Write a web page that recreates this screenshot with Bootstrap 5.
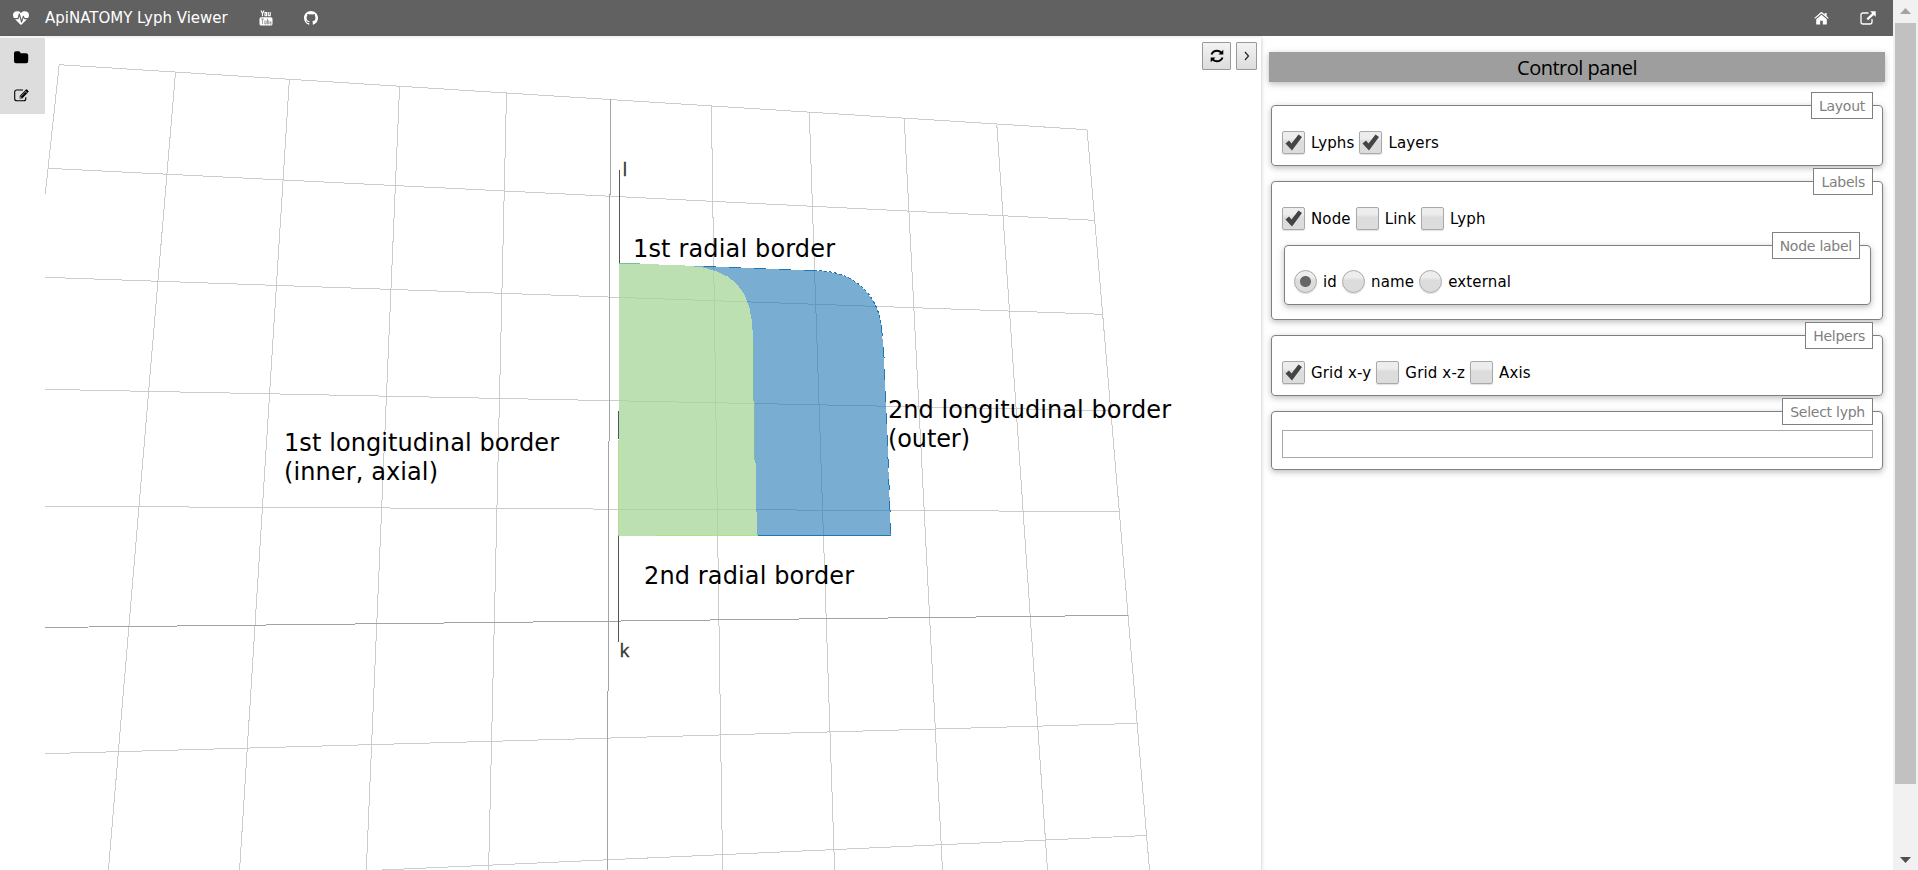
<!DOCTYPE html>
<html lang="en">
<head>
<meta charset="utf-8">
<title>ApiNATOMY Lyph Viewer</title>
<link href="https://cdn.jsdelivr.net/npm/bootstrap@5.3.0/dist/css/bootstrap.min.css" rel="stylesheet">
<script src="https://cdn.jsdelivr.net/npm/bootstrap@5.3.0/dist/js/bootstrap.bundle.min.js"></script>
<style>
  body { font: 15px/1.5 "DejaVu Sans", sans-serif; color: #000; height: 870px; background: #fff; }
  svg { display: block; flex: none; }
  .topbar { height: 36px; background: #616161; color: #fff; padding: 0 17px 0 13px; }
  .brand { margin-left: 16px; letter-spacing: 0; }
  .yt { margin-left: 31px; }
  .gh { margin-left: 31px; }
  .ext { margin-left: 31px; }
  .workspace { border-top: 2px solid #f4f4f4; width: 1261px; box-shadow: 0 2px 4px rgba(0,0,0,.25); }
  .rail { width: 45px; height: 76px; background: #ddd; padding: 13px 0 0 14px; }
  .rail svg + svg { margin-top: 25px; }
  .stage { width: 1216px; }
  .tools { top: 4px; right: 4px; gap: 5px; }
  .tool { height: 28px; border: 1px solid #999; border-radius: 1px; background: linear-gradient(#f3f3f3, #dcdcdc); padding: 0; display: flex; align-items: center; justify-content: center; }
  .tool-wide { width: 29px; }
  .tool-slim { width: 21px; }
  .control { padding: 16px 8px 0 8px; }
  .heading { height: 30px; background: #9e9e9e; font: 20px/32px "Open Sans", "Noto Sans", sans-serif; letter-spacing: -.5px; margin-bottom: 23px; }
  .heading, .group { box-shadow: 0 2px 5px rgba(0,0,0,.16), 0 2px 10px rgba(0,0,0,.12); }
  .group { border: 1px solid #808080; border-radius: 4px; margin: 0 2px 15px; padding: 25px 9px 0 10px; height: 61px; }
  .group-tall { height: 139px; }
  .group-inner { height: 60px; margin: 15px 2px 0 2px; padding: 24px 9px 0; }
  .group-select { height: 59px; padding-top: 18px; }
  .caption { top: -14px; right: 9px; height: 27px; border: 1px solid #808080; background: #fff; color: #808080; font-size: 14px; line-height: 26px; padding: 0 7px; letter-spacing: -.25px; }
  .group-inner > .caption { right: 10px; }
  .opts { height: 23px; gap: 5px; letter-spacing: .15px; }
  .opt { gap: 6px; height: 25px; line-height: 25px; }
  .opt input { appearance: none; width: 23px; height: 23px; margin: -2px 0 0; border: 1px solid #a9a9a9; border-radius: 2px; background: linear-gradient(#ededed 30%, #dcdcdc 45%); box-shadow: 0 1px 1px rgba(0,0,0,.12); }
  .opt input[type=radio] { border-radius: 50%; }
  .opt input[type=radio]:checked { background: radial-gradient(circle, #666 5px, transparent 6px), linear-gradient(#ededed 30%, #dcdcdc 45%); }
  .opt input[type=checkbox]:checked { background: url("data:image/svg+xml,%3Csvg xmlns='http://www.w3.org/2000/svg' viewBox='0 0 21 21'%3E%3Cpath d='M2.500 11.500 6 8.500 8.500 11.500 15.500 2.500 19 5 9 18.500Z' fill='%23444'/%3E%3C/svg%3E"), linear-gradient(#ededed 30%, #dcdcdc 45%); }
  .pick { width: 591px; height: 28px; border: 1px solid #a9a9a9; }
  .scroller { width: 25px; background: #f1f1f1; }
  .thumb { width: 21px; height: 761px; background: #c1c1c1; }
</style>
</head>
<body class="d-flex overflow-hidden">
<div class="d-flex flex-column flex-grow-1">
  <nav class="topbar d-flex align-items-center flex-shrink-0">
    <svg width="16" height="14" viewBox="0 0 1792 1536" fill="#fff"><path d="M1280 896h305q-5 6-10 10.500t-9 7.500l-3 4-623 600q-18 18-44 18t-44-18L228 916q-5-2-21-20h369q22 0 39.500-13.500T638 848l70-281 190 667q6 20 23 33t39 13q21 0 38-13t23-34l146-485 56 112q18 35 57 35zm512-428q0 145-103 300h-369L1209 547q-8-17-25-27t-36-8q-45 5-56 46l-129 430-196-686q-6-20-23.500-33T704 256t-39 13.500T642 304L526 768H103Q0 613 0 468 0 248 127 124T478 0q62 0 126.500 21.500t120 58T820 148t76 68q36-36 76-68t95.500-68.500 120-58T1314 0q224 0 351 124t127 344z"/></svg>
    <span class="brand">ApiNATOMY Lyph Viewer</span>
    <svg class="yt" width="14" height="16" viewBox="0 0 14 16"><g fill="none" stroke="#fff" stroke-width="1.100"><path d="M2 .4 3.500 3.500 5 .4M3.500 3.500V6.300M6 2.500v3.200h1.500V2.500ZM9.300 2v3.500q1 .8 1.900-.5V2v4.300"/></g><rect x=".5" y="7.300" width="13" height="8.300" rx="1.700" fill="#fff"/><path d="M2 9h3M3.500 9v5M5.800 10.500V14h1.400v-3.500M8.500 8.700V14h1.200v-3.200H8.500M12.700 12.400h-1.500M11.200 11v3h1.400" stroke="#8a8a8a" fill="none" stroke-width=".8"/></svg>
    <svg class="gh" width="14" height="14" viewBox="0 0 16 16" fill="#fff"><path d="M8 0C3.580 0 0 3.580 0 8c0 3.540 2.290 6.530 5.470 7.590.4.070.55-.17.55-.38 0-.19-.01-.82-.01-1.490-2.010.37-2.530-.49-2.690-.94-.09-.23-.48-.94-.82-1.130-.28-.15-.68-.52-.01-.53.630-.01 1.080.58 1.230.82.720 1.210 1.870.87 2.330.66.070-.52.280-.87.510-1.070-1.780-.2-3.640-.89-3.640-3.950 0-.87.310-1.590.82-2.150-.08-.2-.36-1.020.08-2.120 0 0 .67-.21 2.200.82a7.500 7.500 0 0 1 4 0c1.530-1.040 2.200-.82 2.200-.82.440 1.100.16 1.920.08 2.120.51.560.82 1.270.82 2.150 0 3.070-1.870 3.750-3.650 3.950.29.250.54.730.54 1.480 0 1.070-.01 1.930-.01 2.200 0 .21.150.46.550.38A8 8 0 0 0 16 8c0-4.420-3.580-8-8-8z"/></svg>
    <svg class="ms-auto" width="15" height="13" viewBox="0 0 15 13" fill="#fff"><path d="M7.500 2.800 2.200 7.200V12q0 .6.600.6H6.200V8.800h2.600v3.800h3.400q.6 0 .6-.6V7.200Z"/><path d="M7.500 0Q7.200 0 6.800.3L.3 5.900l.7.900 6.500-5.400L14 6.800l.7-.9-2.100-1.900V.9h-1.900v1.500L8.200.3Q7.800 0 7.500 0Z"/></svg>
    <svg class="ext" width="16" height="14" viewBox="0 0 16 14"><path d="M8.500 2H3Q1 2 1 4v7q0 2 2 2h7q2 0 2-2V8" fill="none" stroke="#fff" stroke-width="1.300"/><path d="M10.200.3h5.500v5.500L13.800 4 8.100 9.200 6.500 7.600l5.600-5.400Z" fill="#fff"/></svg>
  </nav>
  <div class="d-flex flex-grow-1">
    <main class="workspace d-flex position-relative flex-shrink-0">
      <div class="rail flex-shrink-0">
        <svg width="15" height="13" viewBox="0 0 15 13"><path d="M0 2.200Q0 .3 2 .3h2.500q2 0 2 2H12q2.200 0 2.200 2V10q0 2.200-2 2.200H2Q0 12.200 0 10Z"/></svg>
        <svg width="15" height="13" viewBox="0 0 15 13"><path d="M9 1H2.800Q.7 1 .7 3v6.800q0 2 2.100 2h7q2 0 2-2V8.200" fill="none" stroke="#000" stroke-width="1.100"/><path d="M5.700 9.500V7L12 .6q.5-.5 1 0l1.400 1.400q.5.500 0 1L8.200 9.500Z"/><path d="m7 7.300 4.500-4.500M6.500 7.500v1.200h1.200M11 1.800 13.200 4" stroke="#ddd" stroke-width=".6" fill="none"/></svg>
      </div>
      <svg class="stage" height="832" viewBox="45 38 1216 832">
        <g fill="none" stroke="#ccc" shape-rendering="crispEdges">
          <path d="M59.200 64.700 1087.100 129.700M47.800 168.300 1094.400 220.300M45 277.300 1102.400 314.300M45 389.300 1110.500 410.700M45 506.300 1119.300 511.600M45 753.700 1137.200 723.400M382 870 1146 835.500"/>
          <path d="M59.200 64.700 45.300 193.700M175.500 72.300 108.400 870M289.400 79.300 239.600 870M399.600 86.500 366.300 870M506.500 93.500 488.600 870M711.400 106.500 722.600 870M809.300 112.700 834.600 870M904.200 118.300 942.500 870M996.800 124.500 1047.500 870M1087.100 129.700 1149.500 870"/>
          <path stroke="#a3a3a3" d="M610.400 99.500 607.300 870M45 627.500 1128 615.300"/>
          <path stroke="#555" d="M619.500 170V263M618.500 535V642"/>
        </g>
        <g shape-rendering="crispEdges">
          <path fill="#1f78b4" fill-opacity=".6" d="M685 265.500 814 270.700C850 270 876 290 881.300 325L884 357 891 535.500H757L753 340C753 290 735 268 685 265.500Z"/>
          <path fill="#a6d698" fill-opacity=".75" d="M619 263 685 265.500C735 268 753 290 753 340L757 535.500H618.500Z"/>
          <path fill="none" stroke="#1f78b4" stroke-dasharray="12 13" d="M704 266.500 814 270.700"/>
          <path fill="none" stroke="#1f78b4" stroke-dasharray="3 2" d="M814 270.700C850 270 876 290 881.300 325"/>
          <path fill="none" stroke="#1f78b4" stroke-dasharray="11 11" d="M881.300 325 884 357 891 535"/>
          <path stroke="#1f78b4" d="M758 535.500H891"/>
          <path stroke="#b2df8a" d="M618.500 440V535M655 535.500H758"/>
          <path stroke="#7fb8a4" fill="none" d="M619 263.500H640M753 340 755 460"/>
          <path stroke="#3f5f5f" d="M618.500 411V439"/>
        </g>
        <g font-family="DejaVu Sans, sans-serif" font-size="24">
          <text x="633" y="257" textLength="202">1st radial border</text>
          <text x="644" y="584" textLength="210">2nd radial border</text>
          <text x="284" y="451" textLength="275">1st longitudinal border</text>
          <text x="284" y="480" textLength="154">(inner, axial)</text>
          <text x="888" y="418" textLength="283">2nd longitudinal border</text>
          <text x="888" y="447" textLength="82">(outer)</text>
        </g>
        <g font-family="Open Sans, sans-serif" font-size="19" fill="#333" stroke="#333" stroke-width=".3">
          <text x="622.500" y="176">l</text>
          <text x="619.500" y="657">k</text>
        </g>
      </svg>
      <div class="tools position-absolute d-flex">
        <button class="tool tool-wide"><svg width="14" height="14" viewBox="0 0 14 14"><path d="M1.500 5.500Q3 1.700 7 1.700q2.500 0 4.300 1.800M12.500 8.500Q11 12.300 7 12.300q-2.500 0-4.300-1.800" fill="none" stroke="#000" stroke-width="2"/><path d="M13.300.8V5.600H8.500ZM.7 13.200V8.400h4.800Z"/></svg></button>
        <button class="tool tool-slim"><svg width="6" height="10" viewBox="0 0 6 10"><path d="m1 1 3.500 4L1 9" fill="none" stroke="#222" stroke-width="1.200"/></svg></button>
      </div>
    </main>
    <aside class="control flex-grow-1">
      <div class="heading text-center">Control panel</div>
      <section class="group position-relative"><span class="caption position-absolute">Layout</span>
        <div class="opts d-flex">
          <label class="opt d-flex align-items-center"><input type="checkbox" checked>Lyphs</label>
          <label class="opt d-flex align-items-center"><input type="checkbox" checked>Layers</label>
        </div>
      </section>
      <section class="group group-tall position-relative"><span class="caption position-absolute">Labels</span>
        <div class="opts d-flex">
          <label class="opt d-flex align-items-center"><input type="checkbox" checked>Node</label>
          <label class="opt d-flex align-items-center"><input type="checkbox">Link</label>
          <label class="opt d-flex align-items-center"><input type="checkbox">Lyph</label>
        </div>
        <section class="group group-inner position-relative"><span class="caption position-absolute">Node label</span>
          <div class="opts d-flex">
            <label class="opt d-flex align-items-center"><input type="radio" name="nl" checked>id</label>
            <label class="opt d-flex align-items-center"><input type="radio" name="nl">name</label>
            <label class="opt d-flex align-items-center"><input type="radio" name="nl">external</label>
          </div>
        </section>
      </section>
      <section class="group position-relative"><span class="caption position-absolute">Helpers</span>
        <div class="opts d-flex">
          <label class="opt d-flex align-items-center"><input type="checkbox" checked>Grid x-y</label>
          <label class="opt d-flex align-items-center"><input type="checkbox">Grid x-z</label>
          <label class="opt d-flex align-items-center"><input type="checkbox">Axis</label>
        </div>
      </section>
      <section class="group group-select position-relative"><span class="caption position-absolute">Select lyph</span>
        <input class="pick d-block" type="text" aria-label="Select lyph">
      </section>
    </aside>
  </div>
</div>
<div class="scroller d-flex flex-column align-items-center flex-shrink-0">
  <svg width="25" height="23" viewBox="0 0 25 23"><path d="M7 14 12.500 8 18 14Z" fill="#a3a3a3"/></svg>
  <div class="thumb"></div>
  <svg class="mt-auto" width="25" height="23" viewBox="0 0 25 23"><path d="M7 10 12.500 16 18 10Z" fill="#505050"/></svg>
</div>
</body>
</html>
